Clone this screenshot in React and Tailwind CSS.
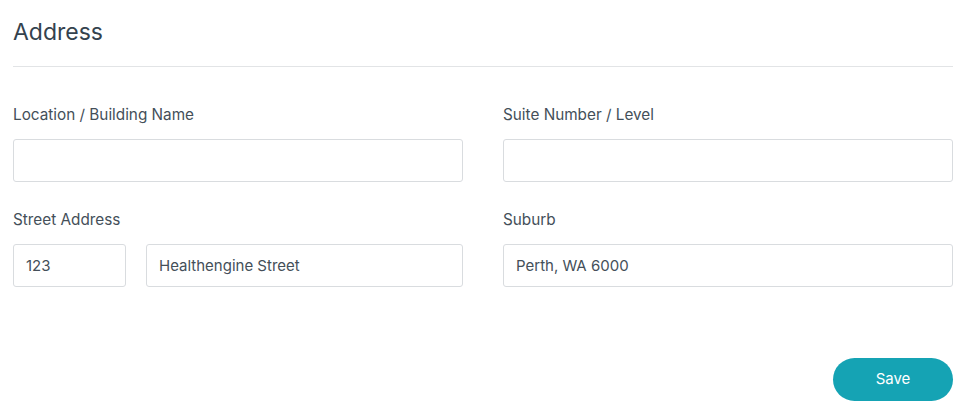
export default function App() {
  return (
    <div className="w-[961px] h-[418px] bg-white pl-[13px] pr-[8px] font-['Inter',sans-serif] text-[#444f59]">
      <div className="pt-[18px] pb-[20px] border-b border-[#e2e4e6]">
        <h2 className="text-[23px] leading-[28px] text-[#34424e]">Address</h2>
      </div>

      <div className="grid grid-cols-2 gap-x-[40px] mt-[38px]">
        <div>
          <label className="block text-[15.3px] leading-[20px]">Location / Building Name</label>
          <input className="mt-[14px] w-full h-[43px] border border-[#d9dcdf] rounded-[3px] px-[12px] text-[15px] outline-none" />
        </div>
        <div>
          <label className="block text-[15.3px] leading-[20px]">Suite Number / Level</label>
          <input className="mt-[14px] w-full h-[43px] border border-[#d9dcdf] rounded-[3px] px-[12px] text-[15px] outline-none" />
        </div>

        <div className="mt-[28px]">
          <label className="block text-[15.3px] leading-[20px]">Street Address</label>
          <div className="mt-[14px] flex gap-[20px]">
            <input defaultValue="123" className="w-[113px] h-[43px] border border-[#d9dcdf] rounded-[3px] px-[12px] text-[15px] text-[#444f59] outline-none" />
            <input defaultValue="Healthengine Street" className="flex-1 min-w-0 h-[43px] border border-[#d9dcdf] rounded-[3px] px-[12px] text-[15px] text-[#444f59] outline-none" />
          </div>
        </div>
        <div className="mt-[28px]">
          <label className="block text-[15.3px] leading-[20px]">Suburb</label>
          <input defaultValue="Perth, WA 6000" className="mt-[14px] w-full h-[43px] border border-[#d9dcdf] rounded-[3px] px-[12px] text-[15px] text-[#444f59] outline-none" />
        </div>
      </div>

      <div className="flex justify-end mt-[71px]">
        <button className="w-[120px] h-[43px] rounded-full bg-[#15a3b4] text-white text-[15px]">Save</button>
      </div>
    </div>
  );
}
